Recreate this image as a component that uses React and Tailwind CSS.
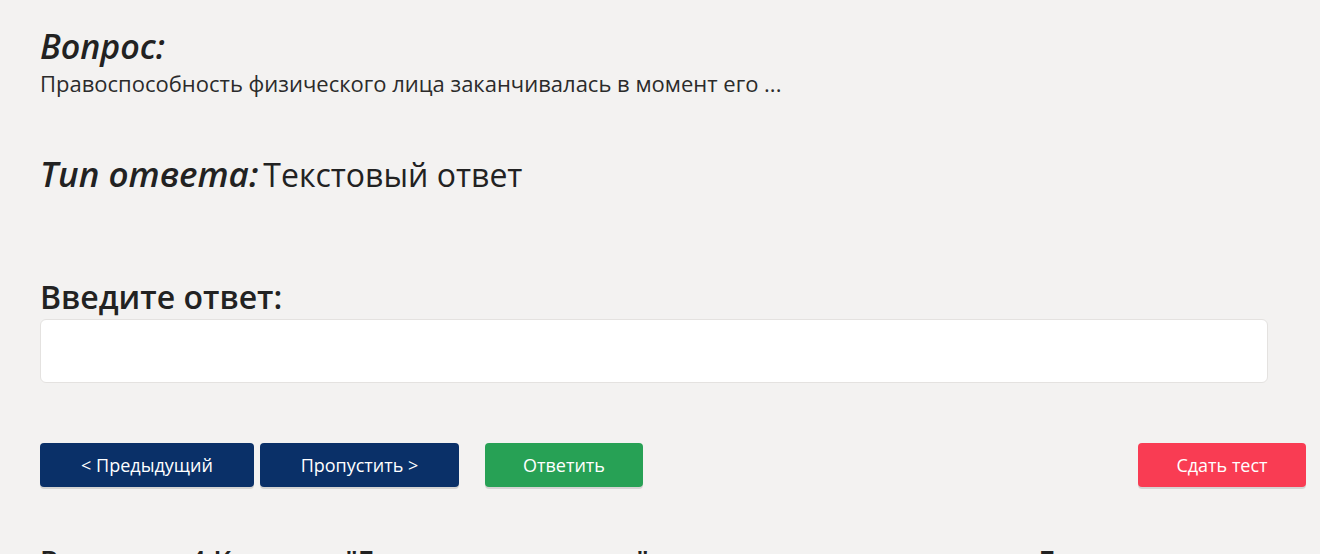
import React from "react";

const font = { fontFamily: '"Open Sans", "Noto Sans", sans-serif' };

export default function App() {
  return (
    <div className="min-h-[554px] bg-[#f3f2f1] text-[#222] overflow-hidden" style={font}>
      <div className="pl-[40px] pr-[52px] pt-[24px]">
        <div className="text-[34px] leading-[44px] font-semibold italic">Вопрос:</div>
        <div className="text-[22px] leading-[30px] text-[#2b2b2b]">
          Правоспособность физического лица заканчивалась в момент его ...
        </div>

        <div className="mt-[54px] flex items-baseline leading-[44px]">
          <span className="text-[35px] font-semibold italic">Тип ответа:</span>
          <span className="ml-[5px] text-[32px]">Текстовый ответ</span>
        </div>

        <div className="mt-[80px] text-[32px] leading-[40px] font-semibold">Введите ответ:</div>
        <input
          type="text"
          className="mt-[2px] block w-full h-[64px] rounded-[6px] border border-[#e4e2e0] bg-white px-3 text-[20px] outline-none"
        />

        <div className="mt-[60px] flex items-center">
          <button className="w-[214px] h-[44px] rounded-[4px] bg-[#0a3068] text-white text-[18px] shadow-[0_2px_0_rgba(0,0,0,0.12)]">
            &lt; Предыдущий
          </button>
          <button className="ml-[6px] w-[199px] h-[44px] rounded-[4px] bg-[#0a3068] text-white text-[18px] shadow-[0_2px_0_rgba(0,0,0,0.12)]">
            Пропустить &gt;
          </button>
          <button className="ml-[26px] w-[158px] h-[44px] rounded-[4px] bg-[#27a155] text-white text-[18px] shadow-[0_2px_0_rgba(0,0,0,0.12)]">
            Ответить
          </button>
          <button className="ml-auto -mr-[38px] w-[168px] h-[44px] rounded-[4px] bg-[#f93c53] text-white text-[18px] shadow-[0_2px_0_rgba(0,0,0,0.12)]">
            Сдать тест
          </button>
        </div>

        <div className="mt-[56px] flex text-[28px] leading-[36px] font-semibold whitespace-nowrap">
          <span>Вопрос из 4 Курс</span>
          <span className="ml-[68px]">"Гражданское право"</span>
          <span className="ml-[390px]">Баллы</span>
        </div>
      </div>
    </div>
  );
}
